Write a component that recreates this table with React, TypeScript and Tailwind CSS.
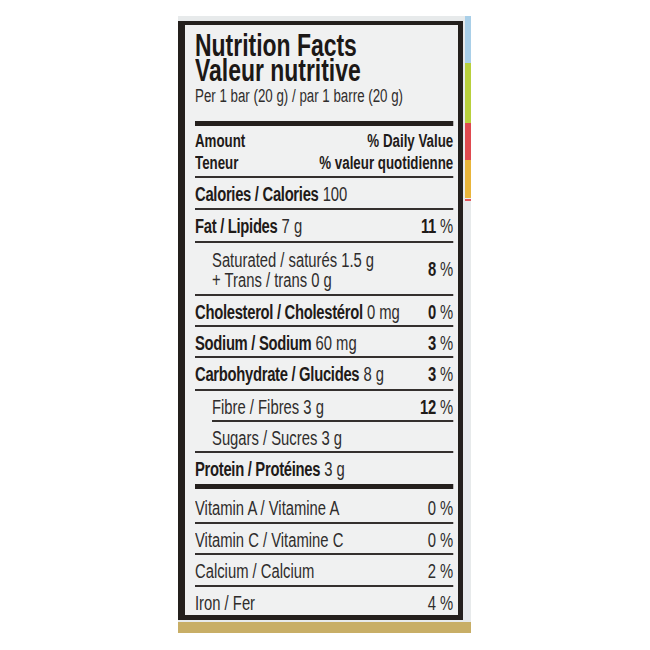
import React from "react";

const B = ({ children }: { children: React.ReactNode }) => (
  <span className="font-bold text-[#1f1b19] tracking-[-0.4px]">{children}</span>
);
const R = ({ children }: { children: React.ReactNode }) => (
  <span className="font-normal text-[#2f2d2c]">{children}</span>
);

const Rule = ({ indent = false }: { indent?: boolean }) => (
  <div className={indent ? "h-[2px] bg-[#34302e] ml-[23px]" : "h-[2px] bg-[#34302e]"} />
);

function Row({
  h,
  pt = 5,
  indent = false,
  left,
  right,
}: {
  h: string;
  pt?: number;
  indent?: boolean;
  left: React.ReactNode;
  right?: React.ReactNode;
}) {
  return (
    <div
      className={`${h} ${pt === 8 ? "pt-[8px]" : "pt-[5px]"} flex justify-between whitespace-nowrap text-[20px] leading-[22px]`}
    >
      <div className={indent ? "pl-[23px]" : ""}>{left}</div>
      <div>{right}</div>
    </div>
  );
}

export default function App() {
  return (
    <div className="w-[650px] h-[650px] bg-white pt-[16px] pl-[178px] font-['Liberation_Sans',Arial,sans-serif]">
      <div className="w-[293px] flex flex-col bg-[#e7eaeb]">
        <div className="flex">
          <div className="w-[285px] pt-[5px] pb-[2px]">
            <div className="h-[599px] border-solid border-[#24201d] border-t-4 border-l-[7px] border-r-[5px] border-b-[5px] bg-[#f0f1f1] pl-[10px] pr-[5px] overflow-visible">
              <div className="w-[349px] origin-left scale-x-[0.74] pt-[8px]">
                <div className="text-[31px] leading-[25px] font-bold text-[#1c1816]">
                  <div>Nutrition Facts</div>
                  <div>Valeur nutritive</div>
                </div>
                <div className="mt-[2px] text-[18px] leading-[22px] text-[#2f2d2c] whitespace-nowrap">
                  Per 1 bar (20 g) / par 1 barre (20 g)
                </div>
                <div className="mt-[14px] h-[5px] bg-[#24201d]" />
                <div className="mt-[4px] text-[18px] leading-[22px] font-bold text-[#1f1b19]">
                  <div className="flex justify-between">
                    <span>Amount</span>
                    <span>% Daily Value</span>
                  </div>
                  <div className="flex justify-between">
                    <span>Teneur</span>
                    <span>% valeur quotidienne</span>
                  </div>
                </div>
                <div className="mt-[2px]">
                  <Rule />
                </div>
                <Row h="h-[30px]" left={<><B>Calories / Calories</B><R> 100</R></>} />
                <Rule />
                <Row
                  h="h-[31px]"
                  left={<><B>Fat / Lipides</B><R> 7 g</R></>}
                  right={<><B>11</B><R> %</R></>}
                />
                <Rule />
                <div className="h-[51px] pt-[7px] flex justify-between items-center whitespace-nowrap text-[20px]">
                  <div className="pl-[23px] leading-[20px] self-start">
                    <div><R>Saturated / saturés 1.5 g</R></div>
                    <div><R>+ Trans / trans 0 g</R></div>
                  </div>
                  <div className="leading-[22px] -mt-[7px]">
                    <B>8</B><R> %</R>
                  </div>
                </div>
                <Rule />
                <Row
                  h="h-[29px]"
                  left={<><B>Cholesterol / Cholestérol</B><R> 0 mg</R></>}
                  right={<><B>0</B><R> %</R></>}
                />
                <Rule />
                <Row
                  h="h-[29px]"
                  left={<><B>Sodium / Sodium</B><R> 60 mg</R></>}
                  right={<><B>3</B><R> %</R></>}
                />
                <Rule />
                <Row
                  h="h-[31px]"
                  left={<><B>Carbohydrate / Glucides</B><R> 8 g</R></>}
                  right={<><B>3</B><R> %</R></>}
                />
                <Rule />
                <Row
                  h="h-[29px]"
                  indent
                  left={<R>Fibre / Fibres 3 g</R>}
                  right={<><B>12</B><R> %</R></>}
                />
                <Rule indent />
                <Row h="h-[29px]" indent left={<R>Sugars / Sucres 3 g</R>} />
                <Rule />
                <Row h="h-[31px]" left={<><B>Protein / Protéines</B><R> 3 g</R></>} />
                <div className="h-[5px] bg-[#24201d]" />
                <Row h="h-[33px]" pt={8} left={<R>Vitamin A / Vitamine A</R>} right={<R>0 %</R>} />
                <Rule />
                <Row h="h-[29px]" left={<R>Vitamin C / Vitamine C</R>} right={<R>0 %</R>} />
                <Rule />
                <Row h="h-[30px]" left={<R>Calcium / Calcium</R>} right={<R>2 %</R>} />
                <Rule />
                <Row h="h-[28px]" left={<R>Iron / Fer</R>} right={<R>4 %</R>} />
              </div>
            </div>
          </div>
          <div className="w-[2px]" />
          <div className="w-[6px] flex flex-col">
            <div className="h-[47px] bg-[#a9cfe8]" />
            <div className="h-[60px] bg-[#b8d03c]" />
            <div className="h-[37px] bg-[#df4a4f]" />
            <div className="h-[38px] bg-[#e9b53a]" />
            <div className="h-[1px]" />
            <div className="h-[2px] bg-[#e0555a]" />
            <div className="flex-1" />
          </div>
        </div>
        <div className="h-[11px] bg-[#c8ae66]" />
      </div>
    </div>
  );
}
